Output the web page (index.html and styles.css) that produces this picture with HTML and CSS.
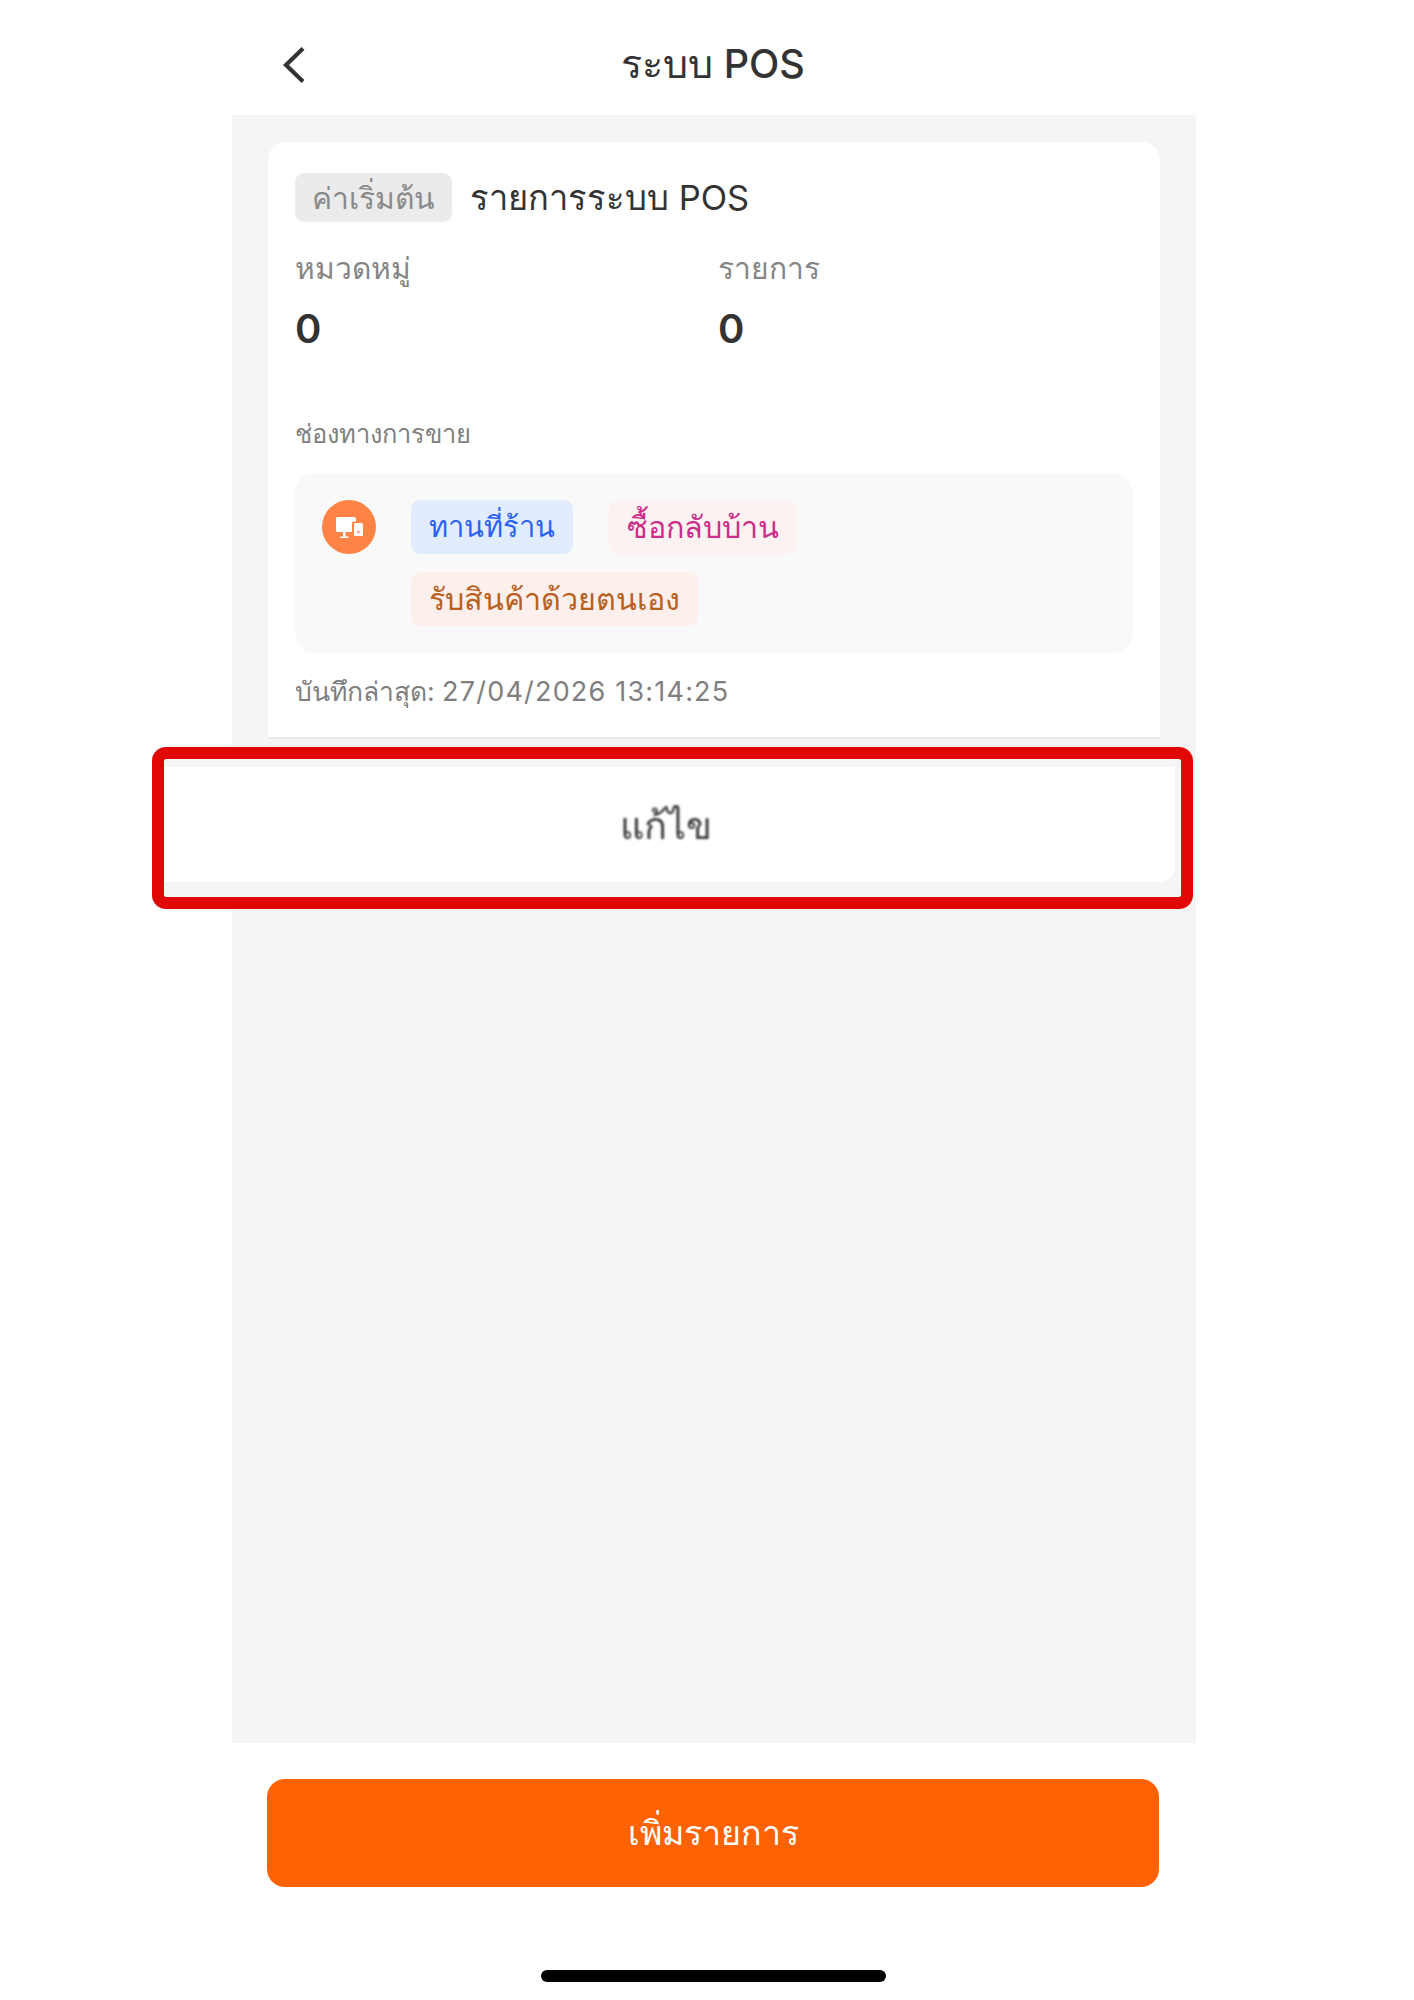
FILE: index.html
```html
<!DOCTYPE html>
<html lang="th">
<head>
    <meta charset="UTF-8">
    <meta name="viewport" content="width=device-width, initial-scale=1.0">
    <title>ระบบ POS</title>
    <link rel="stylesheet" href="styles.css">
</head>
<body>

<div class="app">
    <header class="topbar">
        <a class="back-btn" href="#" aria-label="back">
            <svg width="24" height="38" viewBox="0 0 24 38" fill="none">
                <path d="M21 2.5 L4 19 L21 35.5" stroke="#333" stroke-width="4.2"/>
            </svg>
        </a>
        <h1 class="page-title">ระบบ POS</h1>
    </header>

    <main class="panel">
        <section class="card">
            <div class="card-head">
                <span class="tag-default">ค่าเริ่มต้น</span>
                <span class="card-name">รายการระบบ POS</span>
            </div>

            <div class="stats">
                <div class="stat">
                    <div class="stat-label">หมวดหมู่</div>
                    <div class="stat-value">0</div>
                </div>
                <div class="stat">
                    <div class="stat-label">รายการ</div>
                    <div class="stat-value">0</div>
                </div>
            </div>

            <div class="section-label">ช่องทางการขาย</div>

            <div class="channels">
                <span class="channel-icon">
                    <svg width="27" height="21" viewBox="0 0 27 21" fill="#fff">
                        <path d="M1.500 0 H18 Q20 0 20 1.500 V4.500 H18 Q16 4.500 16 6.500 V15 H1.500 Q0 15 0 13.500 V1.500 Q0 0 1.500 0 Z"/>
                        <rect x="7" y="15" width="2.500" height="5"/>
                        <rect x="4" y="19.500" width="8.500" height="1.500"/>
                        <path fill-rule="evenodd" d="M19.500 6 H25.500 Q27 6 27 7.500 V17.500 Q27 19 25.500 19 H19.500 Q18 19 18 17.500 V7.500 Q18 6 19.500 6 Z M21.500 14 V16 H23.500 V14 Z"/>
                    </svg>
                </span>
                <div class="channel-tags">
                    <span class="chip chip-blue">ทานที่ร้าน</span>
                    <span class="chip chip-pink">ซื้อกลับบ้าน</span>
                    <span class="chip chip-brown">รับสินค้าด้วยตนเอง</span>
                </div>
            </div>

            <div class="saved-at">บันทึกล่าสุด: <span class="saved-time">27/04/2026 13:14:25</span></div>
        </section>
    </main>

    <footer class="bottom">
        <button class="add-btn">เพิ่มรายการ</button>
        <div class="home-bar"></div>
    </footer>

    <!-- red annotation box over the edit button -->
    <div class="callout">
        <div class="edit-btn"><span>แก้ไข</span></div>
    </div>
</div>

</body>
</html>
```

FILE: styles.css
```css
* {
    box-sizing: border-box;
}
body {
    margin: 0;
    background-color: #fff;
    color: #333;
    font-family: Inter, "Noto Sans", "Liberation Sans", sans-serif;
}
.app {
    position: relative;
    display: flex;
    flex-direction: column;
    width: 1414px;
    height: 2000px;
    overflow: hidden;
}
.topbar {
    display: flex;
    align-items: center;
    justify-content: center;
    height: 115px;
    flex-shrink: 0;
    padding: 12px 0 0 12px;
    position: relative;
}
.back-btn {
    position: absolute;
    left: 282px;
    top: 46px;
    line-height: 0;
}
.page-title {
    margin: 0;
    font-size: 39.500px;
    font-weight: 500;
    line-height: 50px;
    color: #333;
}
.panel {
    flex: 1;
    width: 964px;
    margin-left: 232px;
    padding: 27px 36px 0;
    background-color: #f5f5f5;
}
.card {
    height: 597px;
    padding: 31px 27px 0;
    background-color: #fff;
    border-radius: 18px 18px 0 0;
    border-bottom: 2px solid #e8e8e8;
}
.card-head {
    display: flex;
    align-items: center;
    gap: 18px;
}
.tag-default {
    display: flex;
    align-items: center;
    height: 49px;
    padding: 0 17px;
    border-radius: 9px;
    background-color: #ebebeb;
    color: #8a8a8a;
    font-size: 30px;
    line-height: 40px;
}
.card-name {
    font-size: 34.500px;
    line-height: 44px;
    color: #333;
}
.stats {
    display: grid;
    grid-template-columns: 423px 1fr;
    margin-top: 24px;
}
.stat-label {
    font-size: 30px;
    line-height: 44px;
    color: #858585;
}
.stat-value {
    margin-top: 12px;
    font-size: 40px;
    line-height: 54px;
    font-weight: 600;
    color: #333;
}
.section-label {
    margin-top: 58px;
    font-size: 25.500px;
    line-height: 40px;
    color: #808080;
}
.channels {
    display: flex;
    gap: 35px;
    height: 180px;
    margin-top: 19px;
    padding: 27px 27px;
    border-radius: 20px;
    background-color: #f9f9f9;
}
.channel-icon {
    display: flex;
    align-items: center;
    justify-content: center;
    width: 54px;
    height: 54px;
    flex-shrink: 0;
    border-radius: 50%;
    background-color: #ff8345;
}
.channel-tags {
    display: flex;
    flex-wrap: wrap;
    align-content: flex-start;
    gap: 18px 36px;
    width: 500px;
}
.chip {
    display: flex;
    align-items: center;
    height: 54px;
    padding: 0 18px;
    border-radius: 9px;
    font-size: 30.500px;
    line-height: 40px;
    font-weight: 500;
}
.chip-blue {
    background-color: #e1ecfe;
    color: #2b62f5;
    font-size: 29px;
}
.chip-pink {
    background-color: #fbf2f1;
    color: #cc2e8a;
}
.chip-brown {
    background-color: #fdefeb;
    color: #b8601f;
}
.saved-at {
    margin-top: 18px;
    font-size: 26.500px;
    line-height: 40px;
    color: #7f7f7f;
}
.saved-time {
    font-size: 27px;
    letter-spacing: 1.200px;
}
.bottom {
    display: flex;
    flex-direction: column;
    align-items: center;
    height: 257px;
    flex-shrink: 0;
    padding: 36px 0 0 12px;
}
.add-btn {
    width: 892px;
    height: 108px;
    border: none;
    border-radius: 18px;
    background-color: #ff6200;
    color: #fff;
    font-family: inherit;
    font-size: 34px;
    font-weight: 500;
}
.home-bar {
    width: 345px;
    height: 12px;
    margin-top: 83px;
    border-radius: 6px;
    background-color: #000;
}
.callout {
    position: absolute;
    left: 152px;
    top: 747px;
    width: 1041px;
    height: 162px;
    padding: 8px 6px 15px 0;
    border: 12px solid #e00704;
    border-radius: 14px;
    background-color: #f5f5f5;
}
.edit-btn {
    display: flex;
    align-items: center;
    justify-content: center;
    height: 100%;
    padding-right: 8px;
    border-radius: 0 0 16px 0;
    background-color: #fff;
}
.edit-btn span {
    font-size: 38px;
    font-weight: 500;
    line-height: 50px;
    color: #3a3a3a;
    filter: blur(1px);
}
```
